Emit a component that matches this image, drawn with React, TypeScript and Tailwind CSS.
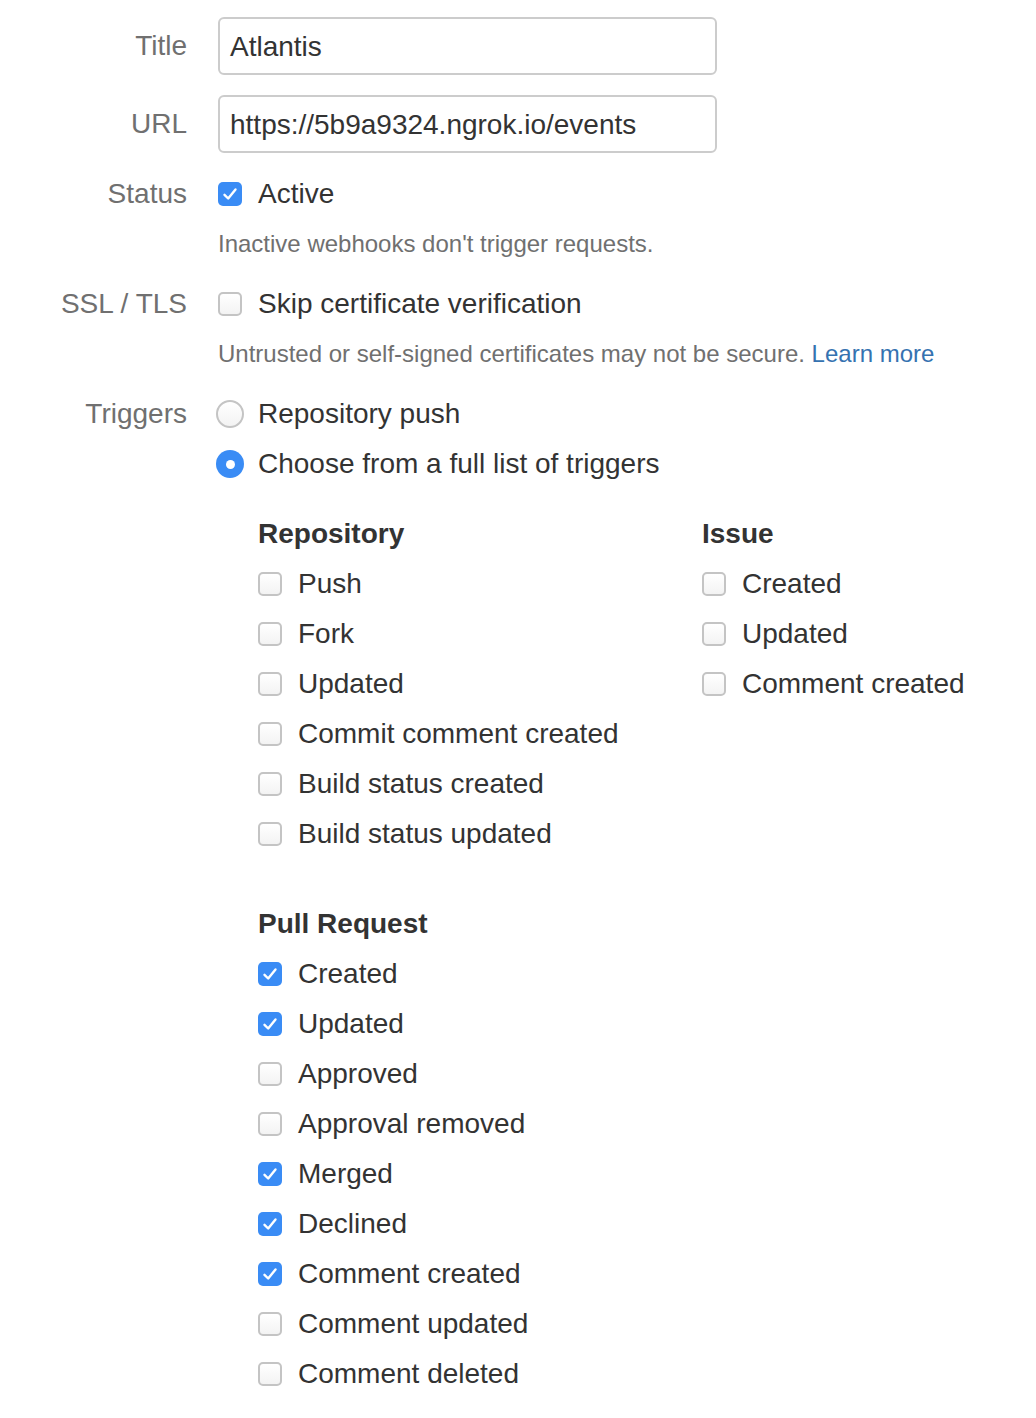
import React from "react";

const Check = ({ checked }: { checked: boolean }) =>
  checked ? (
    <div className="w-[24px] h-[24px] rounded-[5px] bg-[#3a8cf5] flex items-center justify-center shrink-0">
      <svg width="24" height="24" viewBox="0 0 24 24" fill="none">
        <path d="M6.5 12.8 L10.2 16.5 L17.5 7.5" stroke="white" strokeWidth="2.4" strokeLinecap="round" strokeLinejoin="round" />
      </svg>
    </div>
  ) : (
    <div className="w-[24px] h-[24px] rounded-[5px] border-[2px] border-[#c4c4c4] bg-gradient-to-b from-white to-[#f3f3f3] shrink-0" />
  );

const Radio = ({ checked }: { checked: boolean }) =>
  checked ? (
    <div className="w-[28px] h-[28px] rounded-full bg-[#3a8cf5] flex items-center justify-center shrink-0">
      <div className="w-[9px] h-[9px] rounded-full bg-white" />
    </div>
  ) : (
    <div className="w-[28px] h-[28px] rounded-full border-[2px] border-[#c4c4c4] bg-gradient-to-b from-white to-[#f3f3f3] shrink-0" />
  );

const Label = ({ children }: { children?: React.ReactNode }) => (
  <div className="w-[187px] shrink-0 text-right text-[#707070]">{children}</div>
);

const Item = ({ label, checked }: { label: string; checked: boolean }) => (
  <div className="h-[50px] flex items-center">
    <Check checked={checked} />
    <span className="ml-[16px]">{label}</span>
  </div>
);

export default function App() {
  const repo: [string, boolean][] = [
    ["Push", false],
    ["Fork", false],
    ["Updated", false],
    ["Commit comment created", false],
    ["Build status created", false],
    ["Build status updated", false],
  ];
  const issue: [string, boolean][] = [
    ["Created", false],
    ["Updated", false],
    ["Comment created", false],
  ];
  const pr: [string, boolean][] = [
    ["Created", true],
    ["Updated", true],
    ["Approved", false],
    ["Approval removed", false],
    ["Merged", true],
    ["Declined", true],
    ["Comment created", true],
    ["Comment updated", false],
    ["Comment deleted", false],
  ];
  return (
    <div
      className="w-[1036px] h-[1418px] bg-white text-[28px] text-[#333333] leading-none pt-[17px]"
      style={{ fontFamily: '"Liberation Sans", Arial, sans-serif' }}
    >
      {/* Title */}
      <div className="flex items-center h-[58px]">
        <Label>Title</Label>
        <div className="ml-[31px] w-[499px] h-[58px] border-[2px] border-[#cccccc] rounded-[6px] flex items-center px-[10px] pt-[2px]">
          Atlantis
        </div>
      </div>
      {/* URL */}
      <div className="flex items-center h-[58px] mt-[20px]">
        <Label>URL</Label>
        <div className="ml-[31px] w-[499px] h-[58px] border-[2px] border-[#cccccc] rounded-[6px] flex items-center px-[10px] pt-[2px]">
          https://5b9a9324.ngrok.io/events
        </div>
      </div>
      {/* Status */}
      <div className="flex items-center h-[50px] mt-[16px]">
        <Label>Status</Label>
        <div className="ml-[31px] flex items-center">
          <Check checked />
          <span className="ml-[16px]">Active</span>
        </div>
      </div>
      <div className="flex items-center h-[50px]">
        <Label />
        <div className="ml-[31px] text-[24px] text-[#707070]">Inactive webhooks don't trigger requests.</div>
      </div>
      {/* SSL */}
      <div className="flex items-center h-[50px] mt-[10px]">
        <Label>SSL / TLS</Label>
        <div className="ml-[31px] flex items-center">
          <Check checked={false} />
          <span className="ml-[16px]">Skip certificate verification</span>
        </div>
      </div>
      <div className="flex items-center h-[50px]">
        <Label />
        <div className="ml-[31px] text-[24px] text-[#707070]">
          Untrusted or self-signed certificates may not be secure.{" "}
          <span className="text-[#3572b0]">Learn more</span>
        </div>
      </div>
      {/* Triggers */}
      <div className="flex items-center h-[50px] mt-[10px]">
        <Label>Triggers</Label>
        <div className="ml-[29px] flex items-center">
          <Radio checked={false} />
          <span className="ml-[14px]">Repository push</span>
        </div>
      </div>
      <div className="flex items-center h-[50px]">
        <Label />
        <div className="ml-[29px] flex items-center">
          <Radio checked />
          <span className="ml-[14px]">Choose from a full list of triggers</span>
        </div>
      </div>
      {/* Trigger lists */}
      <div className="ml-[258px] mt-[20px]">
        <div className="flex">
          <div className="w-[444px]">
            <div className="h-[50px] flex items-center font-bold">Repository</div>
            {repo.map(([l, c]) => (
              <Item key={l} label={l} checked={c} />
            ))}
          </div>
          <div>
            <div className="h-[50px] flex items-center font-bold">Issue</div>
            {issue.map(([l, c]) => (
              <Item key={l} label={l} checked={c} />
            ))}
          </div>
        </div>
        <div className="mt-[40px]">
          <div className="h-[50px] flex items-center font-bold">Pull Request</div>
          {pr.map(([l, c]) => (
            <Item key={l} label={l} checked={c} />
          ))}
        </div>
      </div>
    </div>
  );
}
